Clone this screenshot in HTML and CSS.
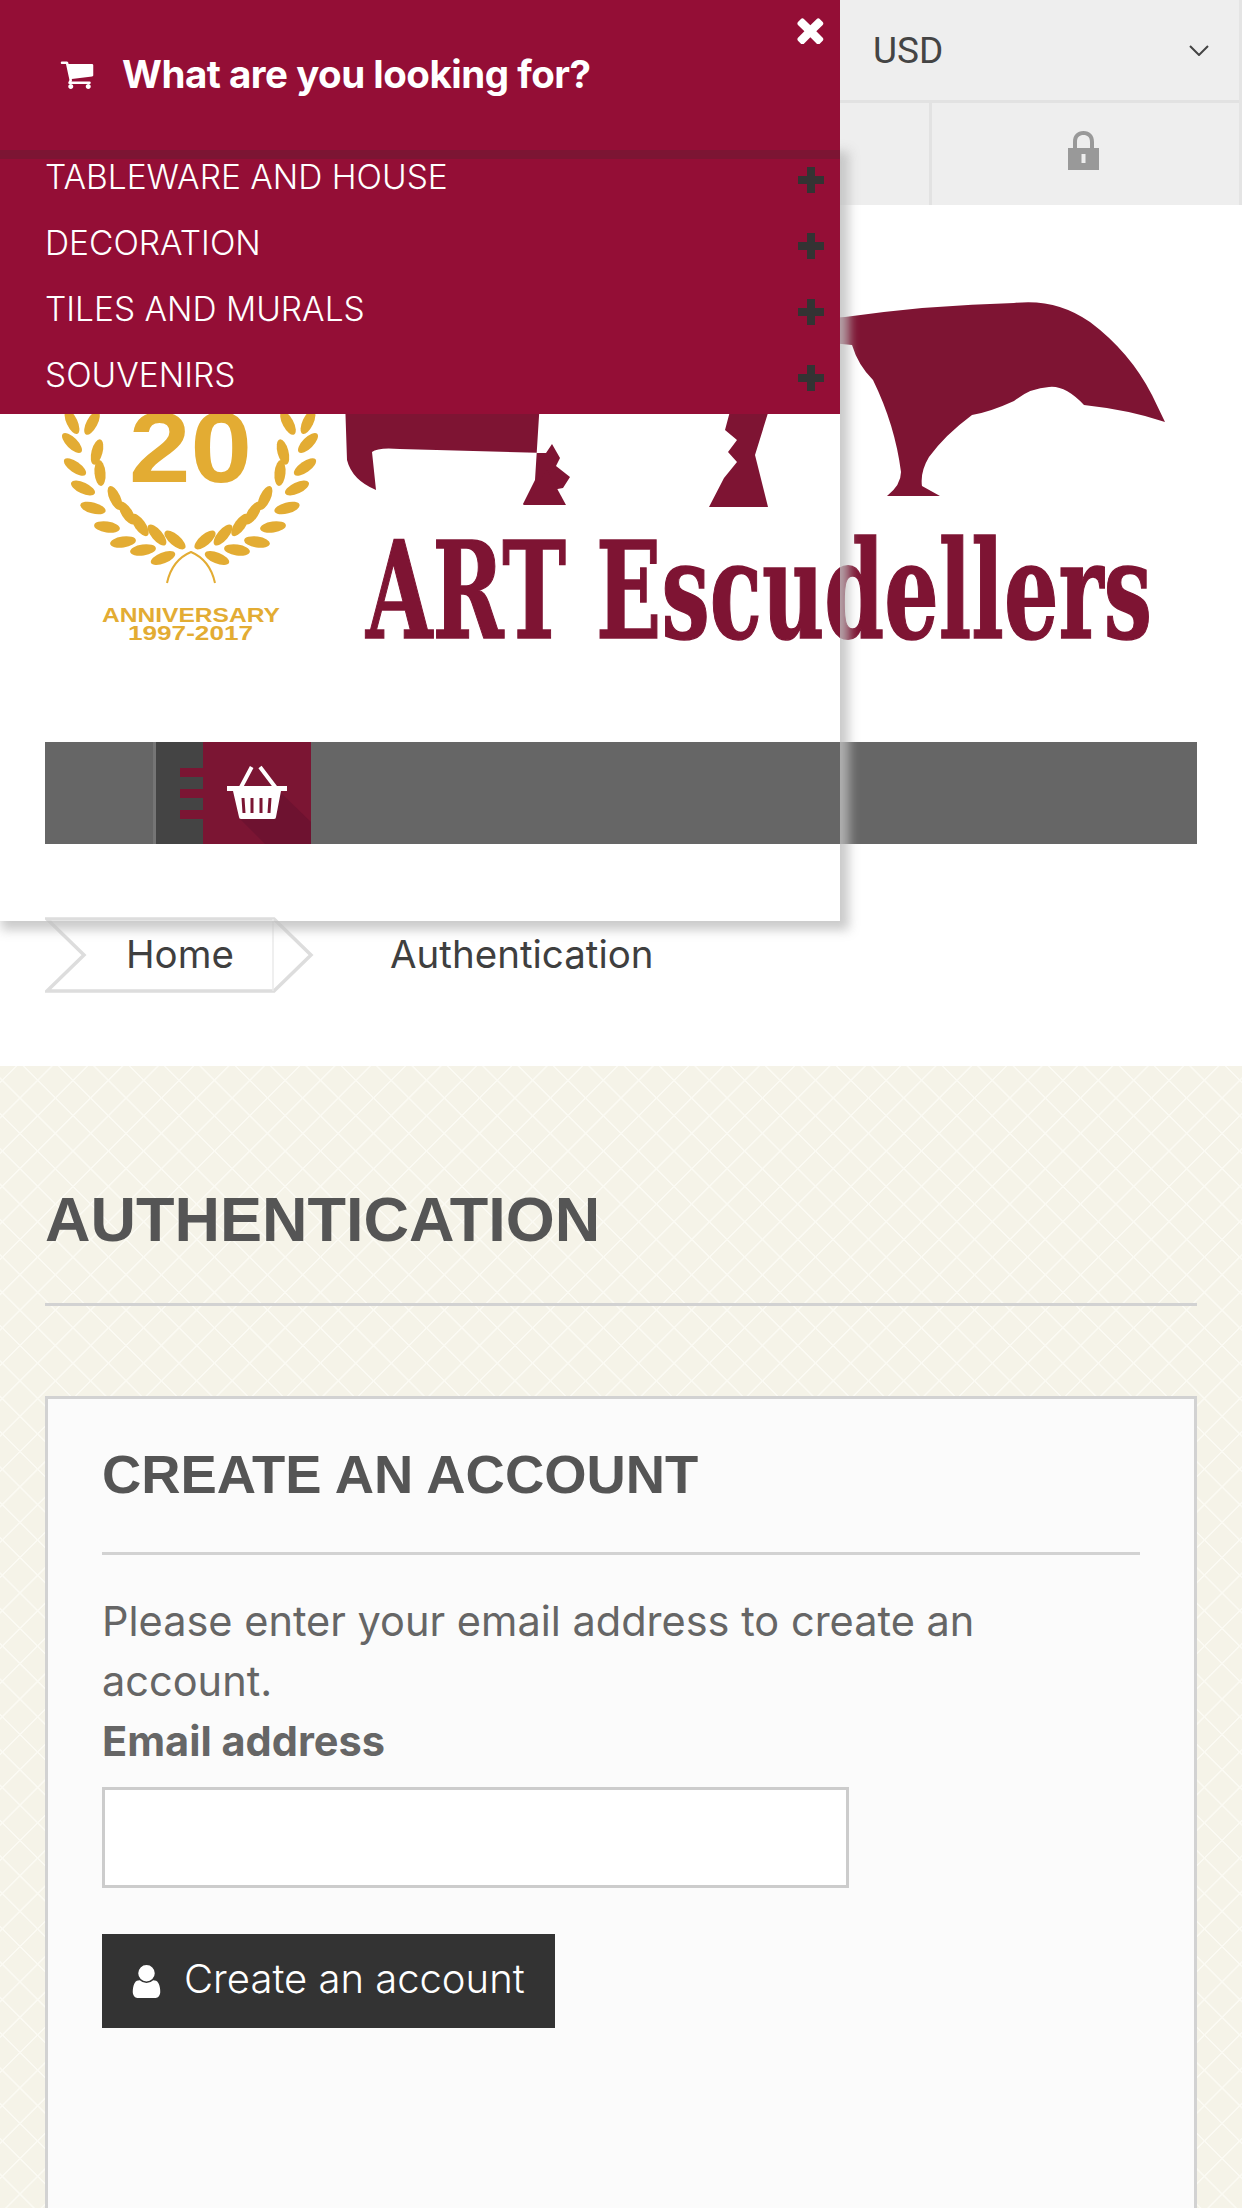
FILE: index.html
```html
<!DOCTYPE html>
<html lang="en">
<head>
<meta charset="utf-8">
<title>Authentication - ART Escudellers</title>
<link rel="stylesheet" href="styles.css">
</head>
<body>
<div class="page">
  <header class="topbar">
    <div class="currency">
      <span class="currency-code">USD</span>
      <svg class="chevron" viewBox="0 0 20 11"><path d="M1 1l9 9 9-9" fill="none" stroke="#444" stroke-width="2"/></svg>
    </div>
    <div class="tools">
      <div class="tool-cell">
        <svg class="lock" viewBox="0 0 31 39"><path fill="#999" fill-rule="evenodd" d="M5 17V11C5 4 9 0 15.500 0S26 4 26 11v6h5v22H0V17zM9 17h13V11c0-5-2.500-7-6.500-7S9 6 9 11zM13.500 23v9h4v-9z"/></svg>
      </div>
    </div>
  </header>

  <svg class="logo" viewBox="0 205 1242 537" role="img" aria-label="ART Escudellers 20th anniversary logo">
    <defs>
      <ellipse id="leaf" cx="0" cy="0" rx="13" ry="5.500"/>
      <g id="wreath-side" fill="#e3ac33">
        <use href="#leaf" transform="translate(72 422) rotate(65)"/>
        <use href="#leaf" transform="translate(72 443) rotate(45)"/>
        <use href="#leaf" transform="translate(75 467) rotate(35)"/>
        <use href="#leaf" transform="translate(83 488) rotate(25)"/>
        <use href="#leaf" transform="translate(93 508) rotate(15)"/>
        <use href="#leaf" transform="translate(107 527) rotate(8)"/>
        <use href="#leaf" transform="translate(123 542) rotate(-8)"/>
        <use href="#leaf" transform="translate(143 550) rotate(-8)"/>
        <use href="#leaf" transform="translate(163 558) rotate(-22)"/>
        <use href="#leaf" transform="translate(92 423) rotate(-62)"/>
        <use href="#leaf" transform="translate(97 452) rotate(-75)"/>
        <use href="#leaf" transform="translate(100 473) rotate(85)"/>
        <use href="#leaf" transform="translate(115 498) rotate(65)"/>
        <use href="#leaf" transform="translate(127 513) rotate(58)"/>
        <use href="#leaf" transform="translate(140 525) rotate(55)"/>
        <use href="#leaf" transform="translate(157 535) rotate(50)"/>
        <use href="#leaf" transform="translate(175 540) rotate(40)"/>
      </g>
    </defs>
    <g>
      <use href="#wreath-side"/>
      <use href="#wreath-side" transform="translate(380 0) scale(-1 1)"/>
      <path d="M167 583Q172 560 191 552Q210 560 215 583" fill="none" stroke="#e3ac33" stroke-width="2"/>
      <text class="logo-20" x="129" y="482" textLength="123" lengthAdjust="spacingAndGlyphs">20</text>
      <text class="logo-ann" x="102" y="622" textLength="178" lengthAdjust="spacingAndGlyphs">ANNIVERSARY</text>
      <text class="logo-ann" x="128" y="640" textLength="125" lengthAdjust="spacingAndGlyphs">1997-2017</text>
    </g>
    <g fill="#7e1433">
      <path d="M345 400L347 460Q352 480 376 490L372 452Q378 447 400 449L546 453L552 444L560 458L556 466L570 477L563 488L552 490L547 504L566 504L523 504L535 480L540 400z"/>
      <path d="M523 505L547 470L566 505z"/>
      <path d="M733 400L772 400L755 455L768 507L709 507L724 478L737 462L728 452L737 440L725 430z"/>
      <path d="M800 320L845 317Q930 305 1014 303Q1056 298 1090 322Q1130 352 1152 395L1165 422Q1130 410 1084 405Q1065 385 1049 387Q1030 388 1014 401Q990 412 972 415Q945 435 929 457Q920 472 922 486L940 496L887 496Q901 485 901 472Q895 425 873 380Q858 365 852 345L800 340z"/>
      <text class="logo-name" x="366" y="638" textLength="786" lengthAdjust="spacingAndGlyphs">ART Escudellers</text>
    </g>
  </svg>

  <nav class="cart-bar">
    <div class="cart-tab">
      <i class="cart-notch"></i><i class="cart-notch"></i><i class="cart-notch"></i>
    </div>
    <a class="cart-block">
      <svg viewBox="0 0 108 102" class="basket">
        <path d="M77 50L108 80V102H62L36 76z" fill="#6e1230"/>
        <path d="M37 47L48.700 25M57 25L73.700 47" fill="none" stroke="#fff" stroke-width="4"/>
        <path fill="#fff" d="M24 44H84V49H78L73 75a2 2 0 0 1-2 2H38a2 2 0 0 1-2-2L30 49H24z"/>
        <path stroke="#7b1533" stroke-width="3" d="M40 56l1 15M49 56v15M58 56v15M67 56l-1 15" fill="none"/>
      </svg>
    </a>
  </nav>

  <ol class="breadcrumb">
    <li class="crumb-home">
      <svg class="crumb-shape" viewBox="0 0 270 76"><path d="M2 2H229L266 38 229 74H2L39 38z" fill="none" stroke="#ddd" stroke-width="3.500"/><path d="M228 2V74" stroke="#eaeaea" stroke-width="1.500"/></svg>
      <span class="crumb-text">Home</span>
    </li>
    <li class="crumb-current">Authentication</li>
  </ol>

  <main class="content">
    <h1 class="page-title">AUTHENTICATION</h1>
    <section class="card">
      <h2 class="card-title">CREATE AN ACCOUNT</h2>
      <p class="card-text">Please enter your email address to create an account.</p>
      <label class="field-label" for="email">Email address</label>
      <input class="field-input" id="email" type="text">
      <button class="submit" type="button">
        <svg class="user-icon" viewBox="256 128 1280 1536"><path fill="#fff" d="M1536 1399q0 109-62.500 187t-150.500 78h-854q-88 0-150.500-78t-62.500-187q0-85 8.500-160.500t31.500-152 58.500-131 94-89 134.500-34.500q131 128 313 128t313-128q76 0 134.500 34.500t94 89 58.500 131 31.500 152 8.500 160.500zm-256-887q0 159-112.500 271.500t-271.500 112.500-271.500-112.500-112.500-271.500 112.500-271.500 271.500-112.500 271.500 112.500 112.500 271.500z"/></svg>
        <span class="submit-label">Create an account</span>
      </button>
    </section>
  </main>

  <aside class="menu">
    <div class="menu-head">
      <svg class="menu-close" viewBox="260 260 1240 1280"><path fill="#fff" d="M1490 1322q0 40-28 68l-136 136q-28 28-68 28t-68-28l-294-294-294 294q-28 28-68 28t-68-28l-136-136q-28-28-28-68t28-68l294-294-294-294q-28-28-28-68t28-68l136-136q28-28 68-28t68 28l294 294 294-294q28-28 68-28t68 28l136 136q28 28 28 68t-28 68l-294 294 294 294q28 28 28 68z"/></svg>
      <svg class="menu-cart" viewBox="0 128 1664 1536"><path fill="#fff" d="M640 1536q0 52-38 90t-90 38-90-38-38-90 38-90 90-38 90 38 38 90zm896 0q0 52-38 90t-90 38-90-38-38-90 38-90 90-38 90 38 38 90zm128-1088v512q0 24-16.500 42.500t-40.500 21.500l-1044 122q13 60 13 70 0 16-24 64h920q26 0 45 19t19 45-19 45-45 19h-1024q-26 0-45-19t-19-45q0-11 8-31.500t16-36 21.500-40 15.500-29.500l-177-823h-204q-26 0-45-19t-19-45 19-45 45-19h256q16 0 28.500 6.500t19.500 15.500 13 24.500 8 26 5.500 29.500 4.500 26h1201q26 0 45 19t19 45z"/></svg>
      <span class="menu-title">What are you looking for?</span>
    </div>
    <div class="menu-body">
      <ul class="menu-list">
        <li class="menu-item"><span>TABLEWARE AND HOUSE</span><svg class="plus" viewBox="0 0 26 26"><path d="M9 0h8v9h9v8h-9v9H9v-9H0V9h9z"/></svg></li>
        <li class="menu-item"><span>DECORATION</span><svg class="plus" viewBox="0 0 26 26"><path d="M9 0h8v9h9v8h-9v9H9v-9H0V9h9z"/></svg></li>
        <li class="menu-item"><span>TILES AND MURALS</span><svg class="plus" viewBox="0 0 26 26"><path d="M9 0h8v9h9v8h-9v9H9v-9H0V9h9z"/></svg></li>
        <li class="menu-item"><span>SOUVENIRS</span><svg class="plus" viewBox="0 0 26 26"><path d="M9 0h8v9h9v8h-9v9H9v-9H0V9h9z"/></svg></li>
      </ul>
    </div>
  </aside>
</div>
</body>
</html>
```

FILE: styles.css
```css
* { box-sizing: border-box; }
html, body { margin: 0; padding: 0; background: #fff; }
.page {
  position: relative;
  width: 1242px;
  height: 2208px;
  overflow: hidden;
  font-family: Inter, "Noto Sans", sans-serif;
  color: #444;
}

/* top bar */
.topbar { background: #eee; height: 205px; border-right: 3px solid #e4e4e4; }
.currency {
  height: 103px;
  border-bottom: 3px solid #e2e2e2;
  padding: 0 30px 0 873px;
  display: flex;
  align-items: center;
  justify-content: space-between;
}
.currency-code { font-family: Roboto, sans-serif; font-size: 37px; color: #444; }
.chevron { width: 20px; height: 11px; }
.tools { height: 102px; display: flex; justify-content: flex-end; }
.tool-cell {
  width: 310px;
  border-left: 3px solid #e2e2e2;
  display: flex;
  justify-content: center;
  padding: 28px 5px 0 0;
}
.lock { width: 31px; height: 39px; }

/* logo */
.logo { display: block; width: 1242px; height: 537px; }
.logo-20 { font: bold 100px "Liberation Sans", sans-serif; fill: #e3ac33; }
.logo-ann { font: bold 20px "Liberation Sans", sans-serif; fill: #e3ac33; }
.logo-name { font: bold 134px "DejaVu Serif", serif; fill: #7e1433; stroke: #7e1433; stroke-width: 1.500px; }

/* cart bar */
.cart-bar {
  height: 102px;
  margin: 0 45px;
  padding-left: 108px;
  background: #666;
  display: flex;
}
.cart-tab {
  width: 50px;
  background: #444;
  border-left: 3px solid #757575;
  display: flex;
  flex-direction: column;
  align-items: flex-end;
  gap: 12px;
  padding-top: 26px;
}
.cart-notch { display: block; width: 23px; height: 9px; background: #7b1533; }
.cart-block { display: block; width: 108px; background: #7b1533; }
.basket { display: block; width: 108px; height: 102px; }

/* breadcrumb */
.breadcrumb {
  list-style: none;
  margin: 73px 0 0 45px;
  padding: 0;
  height: 76px;
  display: flex;
  align-items: center;
  font-size: 38.500px;
  color: #3f3f3f;
}
.crumb-home { position: relative; width: 345px; height: 76px; padding-left: 81px; line-height: 74px; }
.crumb-shape { position: absolute; left: 0; top: 0; width: 270px; height: 76px; }
.crumb-text { position: relative; }
.crumb-current { line-height: 72px; padding-bottom: 2px; }

/* content */
.content {
  margin-top: 73px;
  height: 1142px;
  padding: 117px 45px 0;
  background-color: #f5f3e8;
  background-image:
    repeating-linear-gradient(45deg, transparent 0 23px, #fbfaf3 23.500px 24.500px, transparent 25px),
    repeating-linear-gradient(-45deg, transparent 0 23px, #fbfaf3 23.500px 24.500px, transparent 25px);
}
.page-title {
  margin: 0;
  height: 123px;
  border-bottom: 3px solid #d2d2d2;
  font: bold 63px/72px "Liberation Sans", sans-serif;
  color: #555;
}
.card {
  margin-top: 90px;
  height: 900px;
  border: 3px solid #d2d2d2;
  background: #fbfbfb;
  padding: 40px 54px 0;
}
.card-title {
  margin: 0;
  height: 116px;
  border-bottom: 3px solid #d2d2d2;
  font: bold 54.400px/72px "Liberation Sans", sans-serif;
  color: #555;
}
.card-text {
  margin: 36px 0 0;
  width: 1000px;
  font-size: 41.500px;
  line-height: 60px;
  color: #666;
}
.field-label {
  display: block;
  font-size: 41.500px;
  line-height: 60px;
  font-weight: 700;
  color: #666;
}
.field-input {
  display: block;
  width: 747px;
  height: 101px;
  margin-top: 16px;
  border: 3px solid #ccc;
  background: #fff;
  border-radius: 0;
  outline: none;
}
.submit {
  margin-top: 46px;
  width: 453px;
  height: 94px;
  padding: 0 0 0 30px;
  border: 0;
  background: #333;
  color: #fff;
  display: flex;
  align-items: center;
  gap: 23px;
  font-family: inherit;
  font-size: 40px;
  font-weight: 300;
}
.submit-label { padding-bottom: 5px; }
.user-icon { width: 29px; height: 33px; }

/* slide-over menu */
.menu { position: absolute; left: 0; top: 0; width: 840px; height: 921px; }
.menu-head {
  height: 150px;
  background: #940e36;
  position: relative;
  display: flex;
  align-items: center;
  gap: 28px;
  padding: 0 0 2px 60px;
}
.menu-close { position: absolute; left: 796px; top: 16px; width: 28px; height: 28px; }
.menu-cart { width: 34px; height: 30px; }
.menu-title { font-size: 38.500px; font-weight: 700; color: #fff; letter-spacing: -0.5px; }
.menu-body { height: 771px; box-shadow: 5px 5px 10px 4px rgba(192,192,192,.82); }
.menu-list {
  list-style: none;
  margin: 0;
  height: 264px;
  padding: 1px 16px 22px 45px;
  background: #940e36;
  border-top: 9px solid #7c1533;
  display: flex;
  flex-direction: column;
  gap: 32px;
  color: #fff;
  font-size: 33.500px;
  font-weight: 300;
  line-height: 34px;
}
.menu-item { display: flex; justify-content: space-between; align-items: flex-start; height: 34px; }
.plus { width: 26px; height: 26px; margin-top: 7px; fill: #333; flex: none; }
```
